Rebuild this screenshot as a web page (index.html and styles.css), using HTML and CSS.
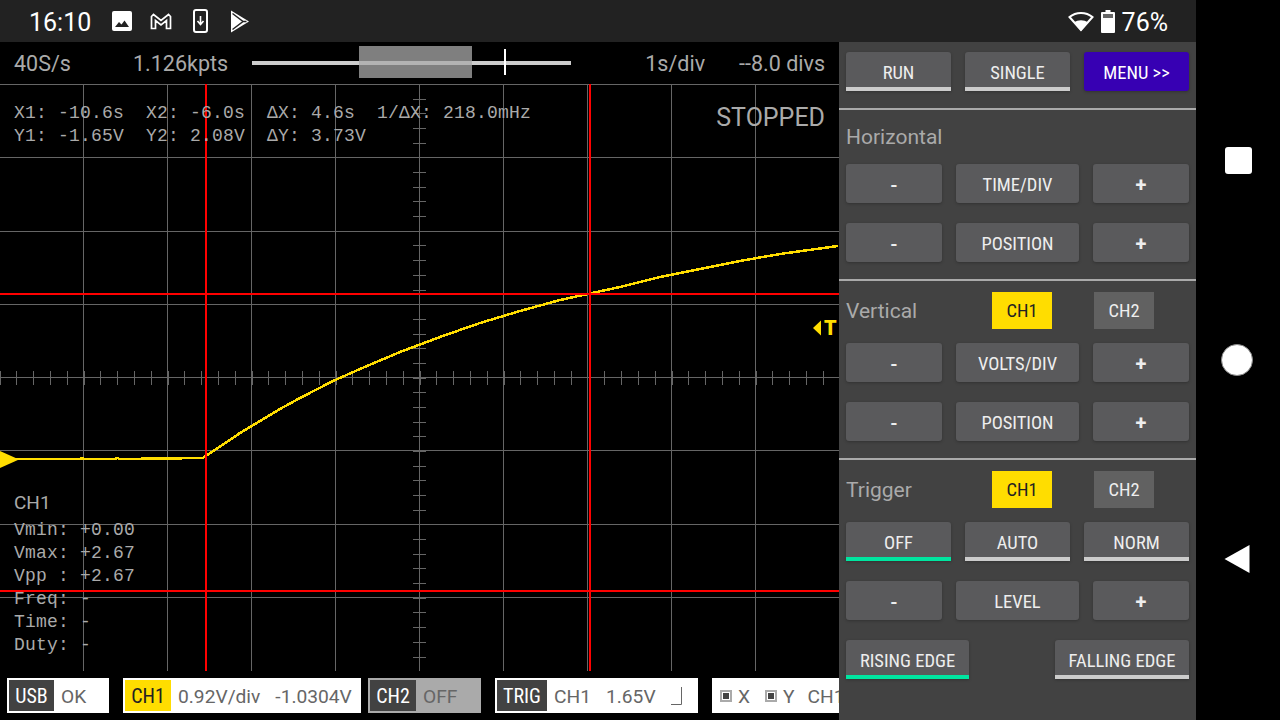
FILE: index.html
```html
<!DOCTYPE html>
<html lang="en">
<head>
    <meta charset="UTF-8">
    <title>Oscilloscope</title>
    <link rel="stylesheet" href="styles.css">
</head>
<body>

<div class="screen">
    <div class="main">
        <div class="statusbar">
            <span class="clock">16:10</span>
            <div class="notif-icons">
                <svg class="ic-image" width="20" height="20" viewBox="0 0 20 20">
                    <rect width="20" height="20" rx="2" fill="#fff"/>
                    <path d="M3 16l4-5 2.500 2.500 3-4 4.500 6.500z" fill="#222"/>
                </svg>
                <svg class="ic-mail" width="22" height="17" viewBox="0 0 22 17">
                    <path d="M1.500 15.500V3.500l2-2L11 7.500l7.500-6 2 2v12h-4V7.500L11 12 5.500 7.500v8z" fill="none" stroke="#fff" stroke-width="1.700"/>
                </svg>
                <svg class="ic-phone" width="15" height="24" viewBox="0 0 15 24">
                    <rect x="1" y="1" width="13" height="22" rx="2" fill="none" stroke="#fff" stroke-width="2"/>
                    <path d="M7.500 7v8M4.500 12l3 3.500 3-3.500" fill="none" stroke="#fff" stroke-width="1.600"/>
                </svg>
                <svg class="ic-play" width="20" height="23" viewBox="0 0 20 23">
                    <path d="M1 .5l18 11-18 11z" fill="#fff"/>
                    <path d="M2.500 3.500l10.500 8-10.500 8M13 11.500l3.500-0" fill="none" stroke="#222" stroke-width="1.500"/>
                    <path d="M2.500 7l6 4.500-6 4.500z" fill="#fff"/>
                </svg>
            </div>
            <div class="sys-icons">
                <svg width="26" height="22" viewBox="0 0 26 22">
                    <path d="M13 20L1.500 7C8 1.500 18 1.500 24.500 7z" fill="none" stroke="#fff" stroke-width="2"/>
                    <path d="M13 21L6 12.500c4-3 10-3 14 0z" fill="#fff"/>
                </svg>
                <svg width="14" height="23" viewBox="0 0 14 23">
                    <path d="M4.500 0h5v2H13a1 1 0 0 1 1 1v19a1 1 0 0 1-1 1H1a1 1 0 0 1-1-1V3a1 1 0 0 1 1-1h3.500z" fill="#fff"/>
                    <rect x="2" y="4" width="10" height="4" fill="#666"/>
                </svg>
                <span class="battery">76%</span>
            </div>
        </div>

        <div class="content">
            <div class="scope">
                <div class="scope-top">
                    <span class="rate">40S/s</span>
                    <span class="points">1.126kpts</span>
                    <div class="slider">
                        <div class="slider-window"></div>
                        <div class="slider-mark"></div>
                    </div>
                    <span class="tdiv">1s/div</span>
                    <span class="divs">--8.0 divs</span>
                </div>

                <div class="graph">
                    <svg class="plot" width="839" height="587" viewBox="0 84 839 587">
                        <g class="grid">
                            <path d="M83.500 84V671M167.500 84V671M251.500 84V671M335.500 84V671M419.500 84V671M503.500 84V671M587.500 84V671M671.500 84V671M755.500 84V671"/>
                            <path d="M0 84.500H839M0 157.500H839M0 231.500H839M0 304.500H839M0 377.500H839M0 450.500H839M0 524.500H839M0 597.500H839"/>
                        </g>
                        <line class="ticks ticks-v" x1="419.500" y1="84" x2="419.500" y2="671" stroke-dasharray="1 13.680"/>
                        <line class="ticks" x1="-0.500" y1="377.500" x2="839" y2="377.500" stroke-dasharray="1 15.800"/>
                        <polyline class="trace" points="0,459 80,459 82,458 84,459 115,459 117,458 120,459 203,458 220,446.500 240,433 260,421 280,409 300,398 333,381 360,369 400,352 440,337 480,323 520,311 560,300 590,293.500 620,287 660,277 700,269 740,261 780,254 838,246"/>
                        <g class="cursors">
                            <path d="M206 84V671M590 84V671M0 294H839M0 591H839"/>
                        </g>
                        <path class="marker" d="M0 451L19 459.500 0 468z"/>
                        <path class="marker" d="M813 328l8-7.500v15z"/>
                    </svg>

                    <span class="trig-t">T</span>
                    <pre class="cursor-info">X1: -10.6s  X2: -6.0s  ΔX: 4.6s  1/ΔX: 218.0mHz
Y1: -1.65V  Y2: 2.08V  ΔY: 3.73V</pre>
                    <span class="stopped">STOPPED</span>
                    <div class="measure">
                        <div class="measure-title">CH1</div>
                        <pre class="measure-list">Vmin: +0.00
Vmax: +2.67
Vpp : +2.67
Freq: -
Time: -
Duty: -</pre>
                    </div>
                </div>

                <div class="bottom-bar">
                    <div class="chip chip-usb"><span class="tag">USB</span><span>OK</span></div>
                    <div class="chip chip-ch1"><span class="tag tag-yellow">CH1</span><span>0.92V/div</span><span class="val2">-1.0304V</span></div>
                    <div class="chip chip-ch2"><span class="tag">CH2</span><span>OFF</span></div>
                    <div class="chip chip-trig">
                        <span class="tag">TRIG</span><span>CH1</span><span class="val3">1.65V</span>
                        <svg class="edge" width="11" height="18" viewBox="0 0 11 18"><path d="M0 17.500h10.500V0" fill="none" stroke="#666"/></svg>
                    </div>
                    <div class="chip chip-xy">
                        <span class="check"></span><span>X</span>
                        <span class="check check-y"></span><span>Y</span>
                        <span class="xy-ch">CH1</span>
                    </div>
                </div>
            </div>

            <div class="panel">
                <div class="section section-top">
                    <div class="row-3">
                        <button class="btn btn-toggle">RUN</button>
                        <button class="btn btn-toggle">SINGLE</button>
                        <button class="btn btn-menu">MENU &gt;&gt;</button>
                    </div>
                </div>

                <div class="section">
                    <div class="head head-plain">Horizontal</div>
                    <div class="row-step">
                        <button class="btn btn-minus">-</button>
                        <button class="btn">TIME/DIV</button>
                        <button class="btn btn-plus">+</button>
                    </div>
                    <div class="row-step">
                        <button class="btn btn-minus">-</button>
                        <button class="btn">POSITION</button>
                        <button class="btn btn-plus">+</button>
                    </div>
                </div>

                <div class="section">
                    <div class="head">
                        <span class="head-title">Vertical</span>
                        <span class="ch ch-on">CH1</span>
                        <span class="ch">CH2</span>
                    </div>
                    <div class="row-step">
                        <button class="btn btn-minus">-</button>
                        <button class="btn">VOLTS/DIV</button>
                        <button class="btn btn-plus">+</button>
                    </div>
                    <div class="row-step">
                        <button class="btn btn-minus">-</button>
                        <button class="btn">POSITION</button>
                        <button class="btn btn-plus">+</button>
                    </div>
                </div>

                <div class="section section-last">
                    <div class="head">
                        <span class="head-title">Trigger</span>
                        <span class="ch ch-on">CH1</span>
                        <span class="ch">CH2</span>
                    </div>
                    <div class="row-3">
                        <button class="btn btn-toggle btn-active">OFF</button>
                        <button class="btn btn-toggle">AUTO</button>
                        <button class="btn btn-toggle">NORM</button>
                    </div>
                    <div class="row-step">
                        <button class="btn btn-minus">-</button>
                        <button class="btn">LEVEL</button>
                        <button class="btn btn-plus">+</button>
                    </div>
                    <div class="row-edge">
                        <button class="btn btn-toggle btn-active btn-rising">RISING EDGE</button>
                        <button class="btn btn-toggle btn-falling">FALLING EDGE</button>
                    </div>
                </div>
            </div>
        </div>
    </div>

    <div class="navbar">
        <div class="nav-square"></div>
        <div class="nav-circle"></div>
        <svg width="26" height="30" viewBox="0 0 26 30"><path d="M25.500 1v28L.5 15z" fill="#fff"/></svg>
    </div>
</div>

</body>
</html>
```

FILE: styles.css
```css
* {
    box-sizing: border-box;
}

body {
    margin: 0;
    background-color: #000;
    font-family: "Roboto", sans-serif;
    overflow: hidden;
}

pre {
    margin: 0;
}

.screen {
    display: flex;
    width: 1280px;
    height: 720px;
}

.main {
    width: 1196px;
    display: flex;
    flex-direction: column;
}

/* Status bar */
.statusbar {
    height: 42px;
    background-color: #222;
    color: #fff;
    display: flex;
    align-items: center;
    padding-left: 29px;
    flex-shrink: 0;
}

.clock {
    font-size: 25px;
    width: 61px;
    padding-top: 2px;
}

.notif-icons {
    display: flex;
    align-items: center;
    margin-left: 22px;
}

.ic-mail {
    margin-left: 18px;
}

.ic-phone {
    margin-left: 21px;
}

.ic-play {
    margin-left: 22px;
}

.sys-icons {
    margin-left: auto;
    margin-right: 28px;
    display: flex;
    align-items: center;
    gap: 7px;
}

.battery {
    font-size: 25px;
    padding-top: 2px;
}

.content {
    display: flex;
    flex: 1;
    min-height: 0;
}

/* Scope */
.scope {
    width: 839px;
    display: flex;
    flex-direction: column;
    background-color: #000;
    color: #aaa;
}

.scope-top {
    height: 42px;
    display: flex;
    align-items: center;
    font-size: 21.500px;
    padding: 0 14px;
}

.rate {
    width: 119px;
}

.points {
    width: 119px;
}

.slider {
    position: relative;
    width: 319px;
    height: 4px;
    background-color: #ccc;
}

.slider-window {
    position: absolute;
    left: 107px;
    top: -15px;
    width: 113px;
    height: 32px;
    background-color: rgba(170, 170, 170, 0.75);
}

.slider-mark {
    position: absolute;
    left: 252px;
    top: -12px;
    width: 2px;
    height: 26px;
    background-color: #fff;
}

.tdiv {
    margin-left: auto;
}

.divs {
    margin-left: 34px;
}

.graph {
    position: relative;
    height: 587px;
}

.plot {
    display: block;
}

.grid path {
    fill: none;
    stroke: #666;
    stroke-width: 1;
    shape-rendering: crispEdges;
}

.ticks {
    stroke: #666;
    stroke-width: 14;
    shape-rendering: crispEdges;
}

.ticks-v {
    stroke-width: 13;
}

.trace {
    fill: none;
    stroke: #ffdd00;
    stroke-width: 2.500;
    shape-rendering: crispEdges;
}

.cursors path {
    fill: none;
    stroke: #f00;
    stroke-width: 2;
    shape-rendering: crispEdges;
}

.marker {
    fill: #ffdd00;
}

.trig-t {
    position: absolute;
    left: 824px;
    top: 234px;
    color: #ffdd00;
    font-size: 20px;
    font-weight: 900;
    line-height: 20px;
}

.cursor-info,
.measure-list {
    font-family: "Liberation Mono", monospace;
    font-size: 18px;
    letter-spacing: 0.2px;
    line-height: 23px;
}

.cursor-info {
    position: absolute;
    left: 14px;
    top: 18px;
}

.stopped {
    position: absolute;
    right: 14px;
    top: 20px;
    font-size: 25px;
    line-height: 28px;
}

.measure {
    position: absolute;
    left: 14px;
    top: 407px;
}

.measure-title {
    font-size: 19px;
    line-height: 24px;
    margin-bottom: 4px;
}

/* Bottom chips */
.bottom-bar {
    height: 49px;
    display: flex;
    align-items: flex-start;
    padding: 7px 0 0 7px;
    overflow: hidden;
    font-size: 19.200px;
    color: #666;
}

.chip {
    height: 35px;
    background-color: #fff;
    padding: 2px;
    display: flex;
    align-items: center;
    flex-shrink: 0;
    margin-right: 14px;
}

.chip span {
    padding-top: 2px;
}

.chip .tag {
    height: 31px;
    padding-top: 0;
    line-height: 33px;
    text-align: center;
    background-color: #424242;
    color: #fff;
    font-size: 20px;
    font-stretch: 75%;
    margin-right: 7px;
}

.chip .tag-yellow {
    background-color: #ffdd00;
    color: #222;
}

.chip-usb {
    width: 102px;
}

.chip-usb .tag {
    width: 45px;
}

.chip-ch1 {
    width: 238px;
    margin-right: 7px;
}

.chip-ch1 .tag {
    width: 46px;
}

.val2 {
    margin-left: 15px;
}

.chip-ch2 {
    width: 113px;
    background-color: #aaa;
}

.chip-ch2 .tag {
    width: 46px;
}

.chip-trig {
    width: 203px;
}

.chip-trig .tag {
    width: 50px;
}

.val3 {
    margin-left: 15px;
}

.edge {
    margin-left: 15px;
}

.chip-xy {
    width: 127px;
    padding-left: 8px;
    margin-right: 0;
    overflow: hidden;
}

.chip .check {
    width: 12px;
    height: 12px;
    padding: 0;
    border: 2px solid #aaa;
    margin-right: 6px;
    background: #fff linear-gradient(#444, #444) center / 6px 6px no-repeat;
    flex-shrink: 0;
}

.chip .check-y {
    margin-left: 15px;
}

.xy-ch {
    margin-left: 13px;
}

/* Right panel */
.panel {
    width: 357px;
    background-color: #424242;
}

.section {
    padding: 11px 7px 17px;
    border-bottom: 2px solid #aaa;
}

.section-top {
    padding-top: 10px;
}

.section-last {
    border-bottom: none;
}

.head {
    height: 37px;
    margin-bottom: 14px;
    display: flex;
    align-items: center;
    color: #aaa;
    font-size: 21px;
}

.head-plain {
    height: 29px;
    padding-top: 3px;
}

.head-title {
    width: 146px;
}

.ch {
    width: 60px;
    height: 37px;
    line-height: 38px;
    text-align: center;
    background-color: #616161;
    color: #eee;
    font-size: 18.500px;
    font-stretch: 75%;
    margin-left: 42px;
}

.ch-on {
    background-color: #ffdd00;
    color: #222;
    margin-left: 0;
}

.row-3,
.row-step,
.row-edge {
    display: grid;
    column-gap: 14px;
}

.row-3 {
    grid-template-columns: 105px 105px 105px;
}

.row-step {
    grid-template-columns: 96px 123px 96px;
}

.row-step + .row-step,
.row-3 + .row-step,
.row-step + .row-edge {
    margin-top: 20px;
}

.row-edge {
    display: flex;
    justify-content: space-between;
}

.btn {
    height: 39px;
    padding: 3px 0 0;
    border: none;
    border-radius: 3px;
    background-color: #5a5a5c;
    color: #eee;
    font-family: "Roboto", sans-serif;
    font-size: 18.500px;
    font-stretch: 75%;
    box-shadow: 0 1px 3px rgba(0, 0, 0, 0.25);
}

.btn-plus {
    font-size: 20px;
    font-weight: 700;
    font-stretch: 100%;
}

.btn-minus {
    font-size: 20px;
    font-weight: 500;
    font-stretch: 100%;
}

.btn-toggle {
    border-bottom: 4px solid #ccc;
    border-radius: 3px 3px 0 0;
    padding-top: 7px;
}

.btn-active {
    border-bottom-color: #00e5a0;
}

.btn-menu {
    background-color: #3700b3;
    color: #fff;
}

.btn-rising {
    width: 123px;
}

.btn-falling {
    width: 134px;
}

/* Android nav */
.navbar {
    width: 84px;
    display: flex;
    flex-direction: column;
    align-items: center;
    background-color: #000;
    padding-top: 147px;
}

.nav-square {
    width: 27px;
    height: 27px;
    border-radius: 3px;
    background-color: #fff;
    margin-left: 1px;
}

.nav-circle {
    width: 32px;
    height: 32px;
    border-radius: 50%;
    background-color: #fff;
    border: 1px solid #888;
    margin-top: 170px;
    margin-right: 3px;
}

.navbar svg {
    margin-top: 168px;
    margin-right: 3px;
}
```
